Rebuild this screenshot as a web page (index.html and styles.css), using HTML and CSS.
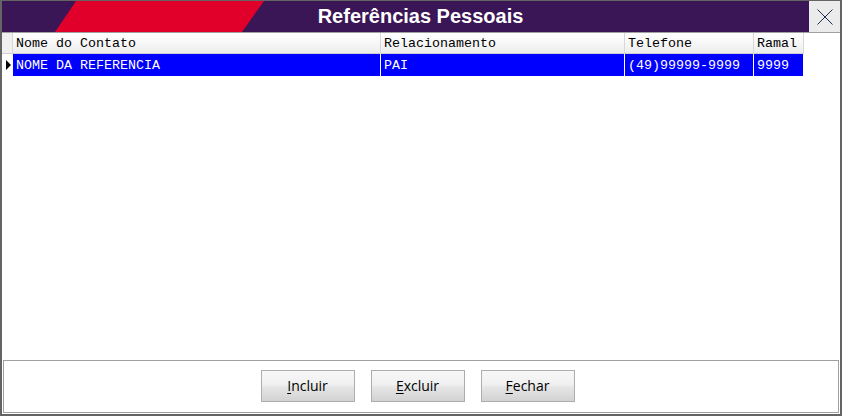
FILE: index.html
```html
<!DOCTYPE html>
<html lang="pt-BR">
<head>
<meta charset="utf-8">
<title>Referências Pessoais</title>
<link rel="stylesheet" href="styles.css">
</head>
<body>
<div class="window">
  <div class="titlebar">
    <div class="title-area"><span class="title-text">Referências Pessoais</span></div>
    <div class="close-btn">
      <svg width="16" height="16" viewBox="0 0 16 16"><path d="M0.5 0.5 L15.5 15.5 M15.5 0.5 L0.5 15.5" stroke="#1d2d4f" stroke-width="1" fill="none"/></svg>
    </div>
  </div>
  <div class="content">
    <div class="grid">
      <div class="row head">
        <div class="cell ind"></div>
        <div class="cell">Nome do Contato</div>
        <div class="cell">Relacionamento</div>
        <div class="cell">Telefone</div>
        <div class="cell">Ramal</div>
      </div>
      <div class="row data">
        <div class="cell ind"><span class="arrow"></span></div>
        <div class="cell">NOME DA REFERENCIA</div>
        <div class="cell">PAI</div>
        <div class="cell">(49)99999-9999</div>
        <div class="cell">9999</div>
      </div>
    </div>
  </div>
  <div class="panel">
    <button class="btn"><u>I</u>ncluir</button>
    <button class="btn"><u>E</u>xcluir</button>
    <button class="btn"><u>F</u>echar</button>
  </div>
</div>
</body>
</html>
```

FILE: styles.css
```css
html, body {
  margin: 0;
  padding: 0;
  background: #ffffff;
}

.window {
  width: 842px;
  height: 416px;
  box-sizing: border-box;
  border-style: solid;
  border-color: #646464;
  border-width: 1px 2px 2px 2px;
  background: #ffffff;
  display: flex;
  flex-direction: column;
}

.titlebar {
  height: 32px;
  box-sizing: border-box;
  border-bottom: 1px solid #a0a0a0;
  display: flex;
  flex: none;
}

.title-area {
  flex: 1;
  position: relative;
  background: #3b1656;
  display: flex;
  align-items: center;
  justify-content: center;
  padding-left: 30px;
  overflow: hidden;
}

.title-area::before {
  content: "";
  position: absolute;
  inset: 0;
  background: #e0002a;
  clip-path: polygon(74px 0, 262px 0, 240px 100%, 53px 100%);
}

.title-text {
  position: relative;
  font-family: "Liberation Sans", Arial, sans-serif;
  font-weight: bold;
  font-size: 20px;
  color: #ffffff;
  line-height: 31px;
}

.close-btn {
  width: 31px;
  background: #ebebeb;
  display: flex;
  align-items: center;
  justify-content: center;
}

.content {
  flex: 1;
  min-height: 0;
}

.grid {
  font-family: "Liberation Mono", "Courier New", monospace;
  font-size: 13.33px;
}

.row {
  display: grid;
  grid-template-columns: 11px 368px 244px 129px 50px;
}

.cell {
  box-sizing: border-box;
  padding-left: 3px;
  white-space: nowrap;
  overflow: hidden;
  display: flex;
  align-items: center;
}

.head .cell {
  height: 21px;
  background: linear-gradient(to bottom, #ffffff 0%, #f7f7f7 50%, #ececec 100%);
  border-right: 1px solid #d8d8d8;
  border-bottom: 1px solid #cfcfcf;
  color: #000000;
  padding-top: 1px;
}

.head .cell.ind {
  background: #f0f0f0;
}

.data .cell {
  height: 22px;
  background: #0000ff;
  color: #ffffff;
  border-right: 1px solid #ffffff;
}

.data .cell.ind {
  background: #ffffff;
  padding-left: 4px;
}

.arrow {
  width: 0;
  height: 0;
  border-top: 5px solid transparent;
  border-bottom: 5px solid transparent;
  border-left: 5px solid #000000;
}

.panel {
  flex: none;
  height: 53px;
  box-sizing: border-box;
  margin: 0 1px 1px 1px;
  border: 1px solid #a0a0a0;
  display: flex;
  justify-content: center;
  align-items: flex-start;
  gap: 16px;
  padding: 9px 7px 0 0;
}

.btn {
  width: 94px;
  height: 32px;
  box-sizing: border-box;
  border: 1px solid #adadad;
  border-radius: 0;
  background: linear-gradient(to bottom, #f7f7f7 0%, #f0f0f0 45%, #e5e5e5 55%, #d2d2d2 100%);
  font-family: "Open Sans", "Noto Sans", sans-serif;
  font-size: 14px;
  color: #000000;
  padding: 0 0 2px 0;
  margin: 0;
}

.btn u {
  text-decoration: underline;
  text-underline-offset: 2px;
}
```
